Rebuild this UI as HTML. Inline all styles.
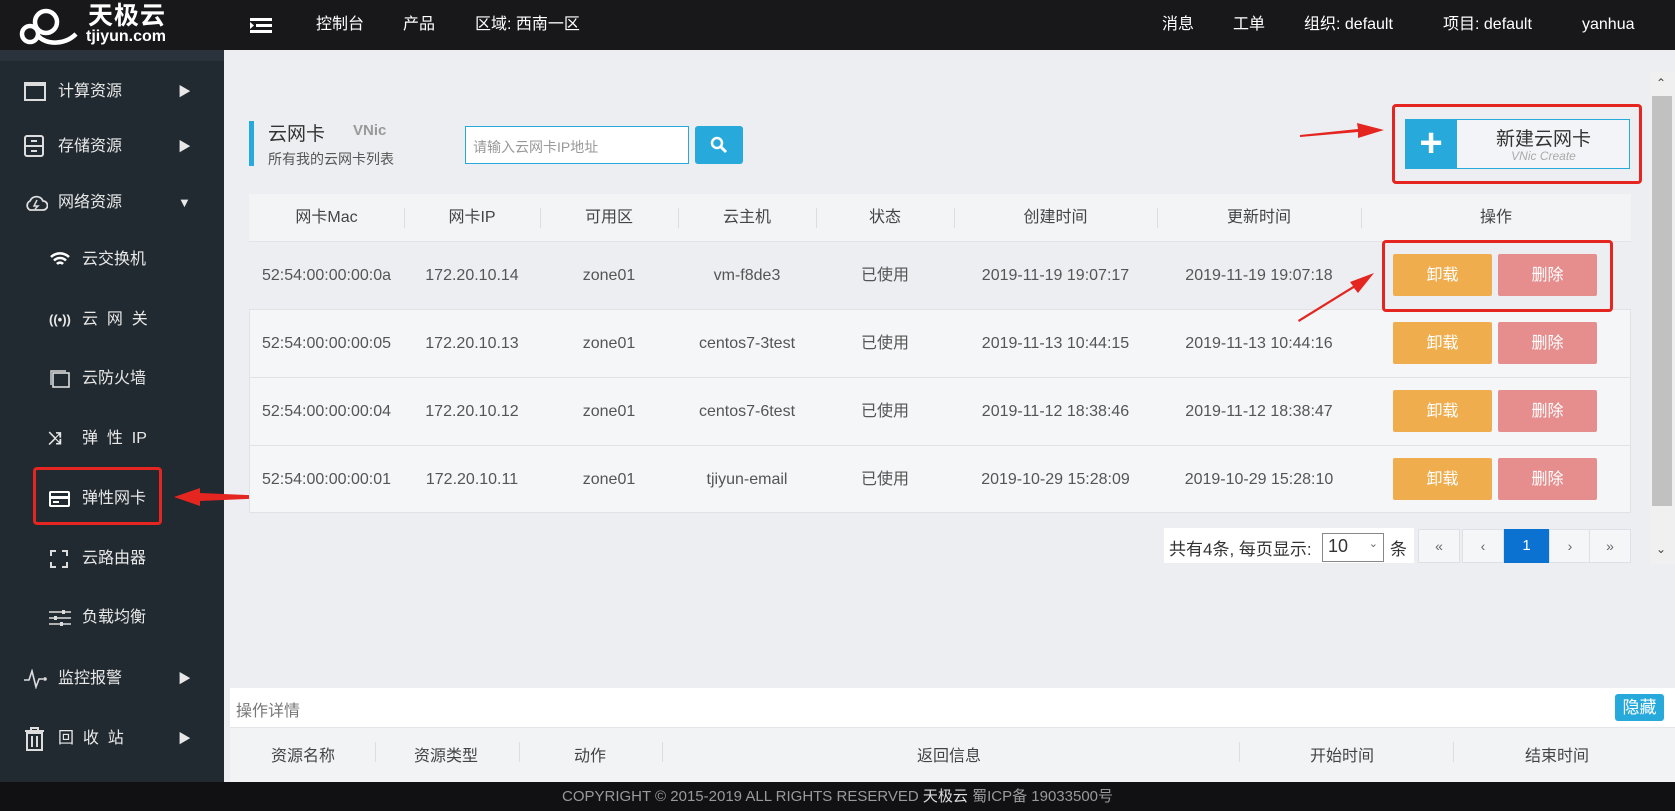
<!DOCTYPE html>
<html><head><meta charset="utf-8"><style>
*{margin:0;padding:0;box-sizing:border-box}
body{width:1675px;height:811px;overflow:hidden;background:#eceef2;font-family:"Liberation Sans","Noto Sans CJK SC",sans-serif;color:#555;position:relative}
.a{position:absolute}
#hd{left:0;top:0;width:1675px;height:50px;background:#18181a;color:#fff;font-size:16px}
#hd span{position:absolute;top:0;line-height:50px}
#sb{left:0;top:50px;width:224px;height:732px;background:#222a31}
.mi{position:absolute;left:0;width:224px;color:#e8e8e8;font-size:16px;height:56px;line-height:56px}
.mi .t{position:absolute;left:58px}
.mi .s{position:absolute;left:82px}
.mi .ar{position:absolute;left:178px;font-size:13px}
.mi svg{position:absolute}
#tb{left:249px;top:194px;width:1382px}
.row{position:absolute;left:0;width:1382px;border-bottom:1px solid #e0e2e6;font-size:16px}
.row div{position:absolute;top:0;text-align:center}
.btn{position:absolute;width:99px;height:42px;line-height:44px;text-align:center;color:#fff;font-size:16px;border-radius:2px}
.y{background:#f0ad4e}.r{background:#e68e8e}
.pg{position:absolute;top:529px;height:34px;width:42px;background:#f5f6f8;border:1px solid #dde0e4;text-align:center;line-height:32px;font-size:14px;color:#666}
</style></head><body>
<div id="hd" class="a">
<svg class="a" style="left:18px;top:6px" width="64" height="40" viewBox="0 0 64 40"><g fill="none" stroke="#fff" stroke-width="4.5"><circle cx="12" cy="28" r="8"/><circle cx="28" cy="16" r="11"/><path d="M20 30 C30 40 48 38 58 28"/></g></svg>
<div class="a" style="left:88px;top:2px;font-size:25px;line-height:28px;font-weight:bold;letter-spacing:1px">天极云</div>
<div class="a" style="left:86px;top:28px;font-size:16px;line-height:18px;font-weight:bold">tjiyun.com</div>
<svg class="a" style="left:250px;top:18px" width="22" height="15"><rect x="0" y="0" width="22" height="3" fill="#fff"/><rect x="6" y="6" width="16" height="3" fill="#fff"/><rect x="0" y="12" width="22" height="3" fill="#fff"/><path d="M0 4 L4 7.5 L0 11Z" fill="#fff"/></svg>
<span style="left:316px">控制台</span><span style="left:403px">产品</span><span style="left:475px">区域: 西南一区</span>
<span style="left:1162px">消息</span><span style="left:1233px">工单</span><span style="left:1304px">组织: default</span><span style="left:1443px">项目: default</span><span style="left:1582px">yanhua</span>
</div>
<div id="sb" class="a">
<div class="a" style="left:0;top:0;width:224px;height:11px;background:#2a333b"></div>
</div>
<div class="mi" style="top:64px"><svg style="left:24px;top:18px" width="22" height="19"><rect x="1" y="1" width="20" height="17" fill="none" stroke="#ddd" stroke-width="2"/><rect x="1" y="1" width="20" height="3" fill="#ddd"/></svg><span class="t">计算资源</span><span class="ar">▶</span></div>
<div class="mi" style="top:119px"><svg style="left:24px;top:16px" width="20" height="22"><rect x="1" y="1" width="18" height="20" rx="2" fill="none" stroke="#ddd" stroke-width="2"/><path d="M1 11H19M7 6H13M7 16H13" stroke="#ddd" stroke-width="2"/></svg><span class="t">存储资源</span><span class="ar">▶</span></div>
<div class="mi" style="top:175px"><svg style="left:24px;top:19px" width="24" height="18"><path d="M6 16 A5 5 0 0 1 6 7 A7 7 0 0 1 19 7 A4.5 4.5 0 0 1 19 16Z" fill="none" stroke="#ddd" stroke-width="1.8"/><path d="M13 6 L10 12 H14 L11 15" fill="none" stroke="#ddd" stroke-width="1.5"/></svg><span class="t">网络资源</span><span class="ar">▼</span></div>
<div class="mi" style="top:232px"><svg style="left:50px;top:20px" width="20" height="15"><path d="M1 5 A13 13 0 0 1 19 5 M4 8.5 A8.5 8.5 0 0 1 16 8.5 M7 12 A4 4 0 0 1 13 12" fill="none" stroke="#fff" stroke-width="2.5"/></svg><span class="s">云交换机</span></div>
<div class="mi" style="top:292px"><span style="position:absolute;left:49px;font-size:13px;font-weight:bold">((•))</span><span class="s">云 &nbsp;网 &nbsp;关</span></div>
<div class="mi" style="top:351px"><svg style="left:50px;top:19px" width="20" height="18"><rect x="3" y="3" width="16" height="14" fill="none" stroke="#ddd" stroke-width="1.6"/><path d="M1 15V1H16" fill="none" stroke="#ddd" stroke-width="1.4"/></svg><span class="s">云防火墙</span></div>
<div class="mi" style="top:411px"><span style="position:absolute;left:48px;font-weight:bold;font-size:17px">⤨</span><span class="s">弹 &nbsp;性 &nbsp;IP</span></div>
<div class="mi" style="top:471px"><svg style="left:49px;top:20px" width="21" height="16"><rect x="1" y="1" width="19" height="14" rx="1" fill="none" stroke="#fff" stroke-width="2"/><rect x="1" y="5" width="19" height="3" fill="#fff"/><rect x="4" y="10" width="6" height="2" fill="#fff"/></svg><span class="s">弹性网卡</span></div>
<div class="mi" style="top:531px"><svg style="left:50px;top:19px" width="18" height="18"><path d="M1 6V1H6M12 1H17V6M17 12V17H12M6 17H1V12" fill="none" stroke="#ddd" stroke-width="2"/></svg><span class="s">云路由器</span></div>
<div class="mi" style="top:590px"><svg style="left:49px;top:19px" width="22" height="18"><path d="M0 3H22M0 9H22M0 15H22" stroke="#ddd" stroke-width="1.6"/><rect x="13" y="1" width="3" height="4" fill="#ddd"/><rect x="5" y="7" width="3" height="4" fill="#ddd"/><rect x="11" y="13" width="3" height="4" fill="#ddd"/></svg><span class="s">负载均衡</span></div>
<div class="mi" style="top:651px"><svg style="left:24px;top:18px" width="24" height="20"><path d="M0 11H5L8 2L12 18L15 10H19" fill="none" stroke="#ddd" stroke-width="1.6"/><circle cx="21" cy="10" r="1.8" fill="#ddd"/></svg><span class="t">监控报警</span><span class="ar">▶</span></div>
<div class="mi" style="top:711px"><svg style="left:24px;top:16px" width="21" height="24"><path d="M1 4H20M7 4V1H14V4" fill="none" stroke="#ddd" stroke-width="2"/><rect x="3" y="6" width="15" height="17" fill="none" stroke="#ddd" stroke-width="2"/><path d="M8 9V20M13 9V20" stroke="#ddd" stroke-width="2"/></svg><span class="t">回 &nbsp;收 &nbsp;站</span><span class="ar">▶</span></div>
<div class="a" style="left:33px;top:467px;width:129px;height:58px;border:3px solid #e42520;border-radius:4px"></div>
<svg class="a" style="left:170px;top:486px" width="100" height="22"><path d="M98 10 L30 7 L30 2 L4 11 L30 20 L30 15 L98 12Z" fill="#e42520"/></svg>

<div class="a" style="left:249px;top:121px;width:5px;height:45px;background:#28a9db"></div>
<div class="a" style="left:268px;top:119px;font-size:19px;color:#333">云网卡</div>
<div class="a" style="left:353px;top:122px;font-size:15px;color:#999;font-weight:bold">VNic</div>
<div class="a" style="left:268px;top:149px;font-size:14px;color:#555">所有我的云网卡列表</div>
<div class="a" style="left:465px;top:126px;width:224px;height:38px;border:1px solid #28a9db;background:#fff;font-size:14px;color:#999;padding:10px 7px">请输入云网卡IP地址</div>
<div class="a" style="left:695px;top:126px;width:48px;height:38px;background:#28a9db;border-radius:3px"><svg style="position:absolute;left:15px;top:10px" width="18" height="18"><circle cx="7" cy="7" r="5" fill="none" stroke="#fff" stroke-width="2.5"/><path d="M11 11L16 16" stroke="#fff" stroke-width="3"/></svg></div>
<div class="a" style="left:1405px;top:119px;width:225px;height:50px;border:1px solid #28a9db;background:#f2f4f7"></div>
<div class="a" style="left:1405px;top:119px;width:52px;height:50px;background:#28a9db;color:#fff;font-size:40px;line-height:48px;text-align:center;font-weight:bold">+</div>
<div class="a" style="left:1457px;top:124px;width:173px;text-align:center;font-size:19px;color:#333">新建云网卡</div>
<div class="a" style="left:1457px;top:149px;width:173px;text-align:center;font-size:12px;color:#aaa;font-style:italic">VNic Create</div>
<div class="a" style="left:1392px;top:104px;width:250px;height:80px;border:3px solid #e42520;border-radius:4px"></div>
<svg class="a" style="left:1298px;top:122px" width="90" height="22"><path d="M2 15 L60 10 L60 16 L86 8 L59 1 L60 7 L2 13Z" fill="#e42520"/></svg>

<div class="a" style="left:249px;top:194px;width:1382px;height:319px;border:1px solid #e0e2e6;background:#f5f6f8"></div>
<div id="tb" class="a">
<div class="row" style="top:0;height:48px;background:#f3f4f6;line-height:48px;color:#444">
<div style="left:0;width:155px">网卡Mac</div><div style="left:155px;width:136px">网卡IP</div><div style="left:291px;width:138px">可用区</div><div style="left:429px;width:138px">云主机</div><div style="left:567px;width:138px">状态</div><div style="left:705px;width:203px">创建时间</div><div style="left:908px;width:204px">更新时间</div><div style="left:1112px;width:270px">操作</div>
<div style="left:155px;top:14px;width:1px;height:20px;background:#ddd"></div><div style="left:291px;top:14px;width:1px;height:20px;background:#ddd"></div><div style="left:429px;top:14px;width:1px;height:20px;background:#ddd"></div><div style="left:567px;top:14px;width:1px;height:20px;background:#ddd"></div><div style="left:705px;top:14px;width:1px;height:20px;background:#ddd"></div><div style="left:908px;top:14px;width:1px;height:20px;background:#ddd"></div><div style="left:1112px;top:14px;width:1px;height:20px;background:#ddd"></div>
</div>
<div class="row" style="top:48px;height:68px;line-height:68px;background:#eceef2"><div style="left:0;width:155px">52:54:00:00:00:0a</div><div style="left:155px;width:136px">172.20.10.14</div><div style="left:291px;width:138px">zone01</div><div style="left:429px;width:138px">vm-f8de3</div><div style="left:567px;width:138px">已使用</div><div style="left:705px;width:203px">2019-11-19 19:07:17</div><div style="left:908px;width:204px">2019-11-19 19:07:18</div></div>
<div class="row" style="top:116px;height:68px;line-height:68px"><div style="left:0;width:155px">52:54:00:00:00:05</div><div style="left:155px;width:136px">172.20.10.13</div><div style="left:291px;width:138px">zone01</div><div style="left:429px;width:138px">centos7-3test</div><div style="left:567px;width:138px">已使用</div><div style="left:705px;width:203px">2019-11-13 10:44:15</div><div style="left:908px;width:204px">2019-11-13 10:44:16</div></div>
<div class="row" style="top:184px;height:68px;line-height:68px"><div style="left:0;width:155px">52:54:00:00:00:04</div><div style="left:155px;width:136px">172.20.10.12</div><div style="left:291px;width:138px">zone01</div><div style="left:429px;width:138px">centos7-6test</div><div style="left:567px;width:138px">已使用</div><div style="left:705px;width:203px">2019-11-12 18:38:46</div><div style="left:908px;width:204px">2019-11-12 18:38:47</div></div>
<div class="row" style="top:252px;height:67px;line-height:67px;border-bottom:none"><div style="left:0;width:155px">52:54:00:00:00:01</div><div style="left:155px;width:136px">172.20.10.11</div><div style="left:291px;width:138px">zone01</div><div style="left:429px;width:138px">tjiyun-email</div><div style="left:567px;width:138px">已使用</div><div style="left:705px;width:203px">2019-10-29 15:28:09</div><div style="left:908px;width:204px">2019-10-29 15:28:10</div></div>
</div>
<div class="btn y" style="left:1393px;top:254px">卸载</div><div class="btn r" style="left:1498px;top:254px">删除</div>
<div class="btn y" style="left:1393px;top:322px">卸载</div><div class="btn r" style="left:1498px;top:322px">删除</div>
<div class="btn y" style="left:1393px;top:390px">卸载</div><div class="btn r" style="left:1498px;top:390px">删除</div>
<div class="btn y" style="left:1393px;top:458px">卸载</div><div class="btn r" style="left:1498px;top:458px">删除</div>
<div class="a" style="left:1382px;top:240px;width:231px;height:72px;border:3px solid #e42520;border-radius:4px"></div>
<svg class="a" style="left:1296px;top:270px" width="82" height="56"><path d="M3 52 L58 18 L62 23 L78 3 L54 12 L57 16 L2 50Z" fill="#e42520"/></svg>

<div class="a" style="left:1164px;top:528px;width:250px;height:35px;background:#fff"></div>
<div class="a" style="left:1169px;top:535px;font-size:17px;color:#333">共有4条, 每页显示:</div>
<div class="a" style="left:1322px;top:533px;width:62px;height:29px;border:1px solid #888;background:#fff;font-size:18px;color:#333;padding:2px 5px">10<span style="position:absolute;right:5px;top:3px;font-size:11px;color:#666">⌄</span></div>
<div class="a" style="left:1390px;top:535px;font-size:17px;color:#333">条</div>
<div class="pg" style="left:1418px">«</div><div class="pg" style="left:1462px">‹</div>
<div class="pg" style="left:1504px;background:#0b72d1;border-color:#0b72d1;color:#fff;font-size:15px;width:45px">1</div>
<div class="pg" style="left:1549px">›</div><div class="pg" style="left:1589px">»</div>

<div class="a" style="left:1650px;top:72px;width:25px;height:492px;background:#f0f0f0"></div>
<div class="a" style="left:1652px;top:96px;width:20px;height:410px;background:#c1c1c1"></div>
<div class="a" style="left:1656px;top:76px;font-size:12px;color:#444">⌃</div>
<div class="a" style="left:1656px;top:542px;font-size:12px;color:#444">⌄</div>

<div class="a" style="left:230px;top:688px;width:1445px;height:40px;background:#fff;border-bottom:1px solid #e3e5e8"></div>
<div class="a" style="left:236px;top:697px;font-size:16px;color:#777">操作详情</div>
<div class="a" style="left:1615px;top:694px;width:49px;height:27px;background:#28a9db;border-radius:3px;color:#fff;font-size:17px;text-align:center;line-height:27px">隐藏</div>
<div class="a" style="left:230px;top:728px;width:1445px;height:54px;background:#f2f3f5;font-size:16px;color:#444">
<span class="a" style="left:41px;top:14px">资源名称</span><span class="a" style="left:184px;top:14px">资源类型</span><span class="a" style="left:344px;top:14px">动作</span><span class="a" style="left:687px;top:14px">返回信息</span><span class="a" style="left:1080px;top:14px">开始时间</span><span class="a" style="left:1295px;top:14px">结束时间</span>
<i class="a" style="left:145px;top:14px;width:1px;height:20px;background:#ddd"></i><i class="a" style="left:289px;top:14px;width:1px;height:20px;background:#ddd"></i><i class="a" style="left:432px;top:14px;width:1px;height:20px;background:#ddd"></i><i class="a" style="left:1009px;top:14px;width:1px;height:20px;background:#ddd"></i><i class="a" style="left:1223px;top:14px;width:1px;height:20px;background:#ddd"></i>
</div>
<div class="a" style="left:0;top:782px;width:1675px;height:29px;background:#111113;color:#999;font-size:15px;text-align:center;line-height:29px">COPYRIGHT © 2015-2019 ALL RIGHTS RESERVED <span style="color:#ddd">天极云</span> 蜀ICP备 19033500号</div>
</body></html>
